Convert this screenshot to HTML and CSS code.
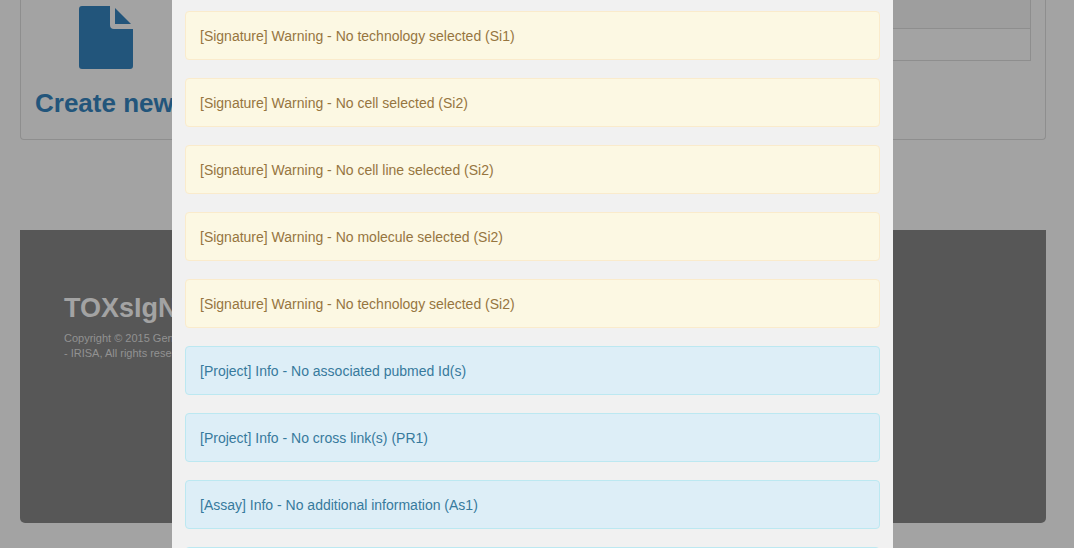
FILE: index.html
```
<!DOCTYPE html>
<html lang="en">
<head>
<meta charset="utf-8">
<title>TOXsIgN</title>
<link rel="stylesheet" href="styles.css">
</head>
<body>
<div class="page">
  <main class="panel">
    <a class="create" href="#">
      <svg class="create-icon" viewBox="0 0 54 63" aria-hidden="true">
        <path d="M3 0H31V19Q31 23 35 23H54V60Q54 63 51 63H3Q0 63 0 60V3Q0 0 3 0Z"/>
        <path d="M36 2L52 18H36Z"/>
      </svg>
      <span class="create-label">Create new</span>
    </a>
    <table class="summary">
      <tbody>
        <tr><td></td></tr>
        <tr><td></td></tr>
      </tbody>
    </table>
  </main>
  <footer class="footer">
    <h2 class="brand">TOXsIgN</h2>
    <p class="copyright">Copyright © 2015 Genouest<br>- IRISA, All rights reserved</p>
  </footer>
</div>
<div class="overlay">
  <section class="modal" role="dialog" aria-label="Validation messages">
    <div class="alert warning">[Signature] Warning - No technology selected (Si1)</div>
    <div class="alert warning">[Signature] Warning - No cell selected (Si2)</div>
    <div class="alert warning">[Signature] Warning - No cell line selected (Si2)</div>
    <div class="alert warning">[Signature] Warning - No molecule selected (Si2)</div>
    <div class="alert warning">[Signature] Warning - No technology selected (Si2)</div>
    <div class="alert info">[Project] Info - No associated pubmed Id(s)</div>
    <div class="alert info">[Project] Info - No cross link(s) (PR1)</div>
    <div class="alert info">[Assay] Info - No additional information (As1)</div>
    <div class="alert info"></div>
  </section>
</div>
</body>
</html>
```
FILE: styles.css
```
* { box-sizing: border-box; }

body {
  margin: 0;
  overflow: hidden;
  background: #a3a3a3;
  font-family: "Liberation Sans", Arial, sans-serif;
  font-size: 14px;
  line-height: 19px;
}

.page { padding: 0 28px 24px 20px; }

.panel {
  display: flex;
  justify-content: space-between;
  align-items: flex-start;
  padding: 0 14px 20px;
  border: 1px solid #8e8e8e;
  border-top: 0;
  border-radius: 0 0 4px 4px;
}

.create {
  display: flex;
  flex-direction: column;
  align-items: center;
  gap: 18px;
  padding-top: 6px;
  color: #22557b;
  text-decoration: none;
}

.create-icon {
  width: 54px;
  height: 63px;
  fill: currentColor;
}

.create-label {
  min-width: 142px;
  font-size: 26px;
  font-weight: bold;
  line-height: 32px;
}

.summary {
  width: 40%;
  border-collapse: collapse;
}

.summary td {
  height: 32px;
  border: 1px solid #8e8e8e;
}

.summary tr:first-child td {
  height: 28px;
  border-top: 0;
  background: #9e9e9e;
}

.footer {
  min-height: 293px;
  margin-top: 90px;
  padding: 62px 44px;
  border-radius: 0 0 5px 5px;
  background: #575757;
  color: #a3a3a3;
}

.brand {
  margin: 0 0 6px;
  font-size: 27px;
  line-height: 33px;
}

.copyright {
  margin: 0;
  color: #929292;
  font-size: 11px;
  line-height: 15px;
}

.overlay {
  position: fixed;
  inset: 0 9px 0 0;
  display: flex;
  justify-content: center;
  overflow: hidden;
}

.modal {
  display: flex;
  flex: 0 1 721px;
  flex-direction: column;
  gap: 18px;
  padding: 11px 13px;
  background: #f1f1f1;
}

.alert {
  flex: none;
  min-height: 49px;
  padding: 15px 14px 13px;
  border: 1px solid;
  border-radius: 4px;
}

.warning {
  border-color: #faebcc;
  background: #fcf8e3;
  color: #96753f;
}

.info {
  border-color: #bce8f1;
  background: #ddeef7;
  color: #377a9d;
}
```
